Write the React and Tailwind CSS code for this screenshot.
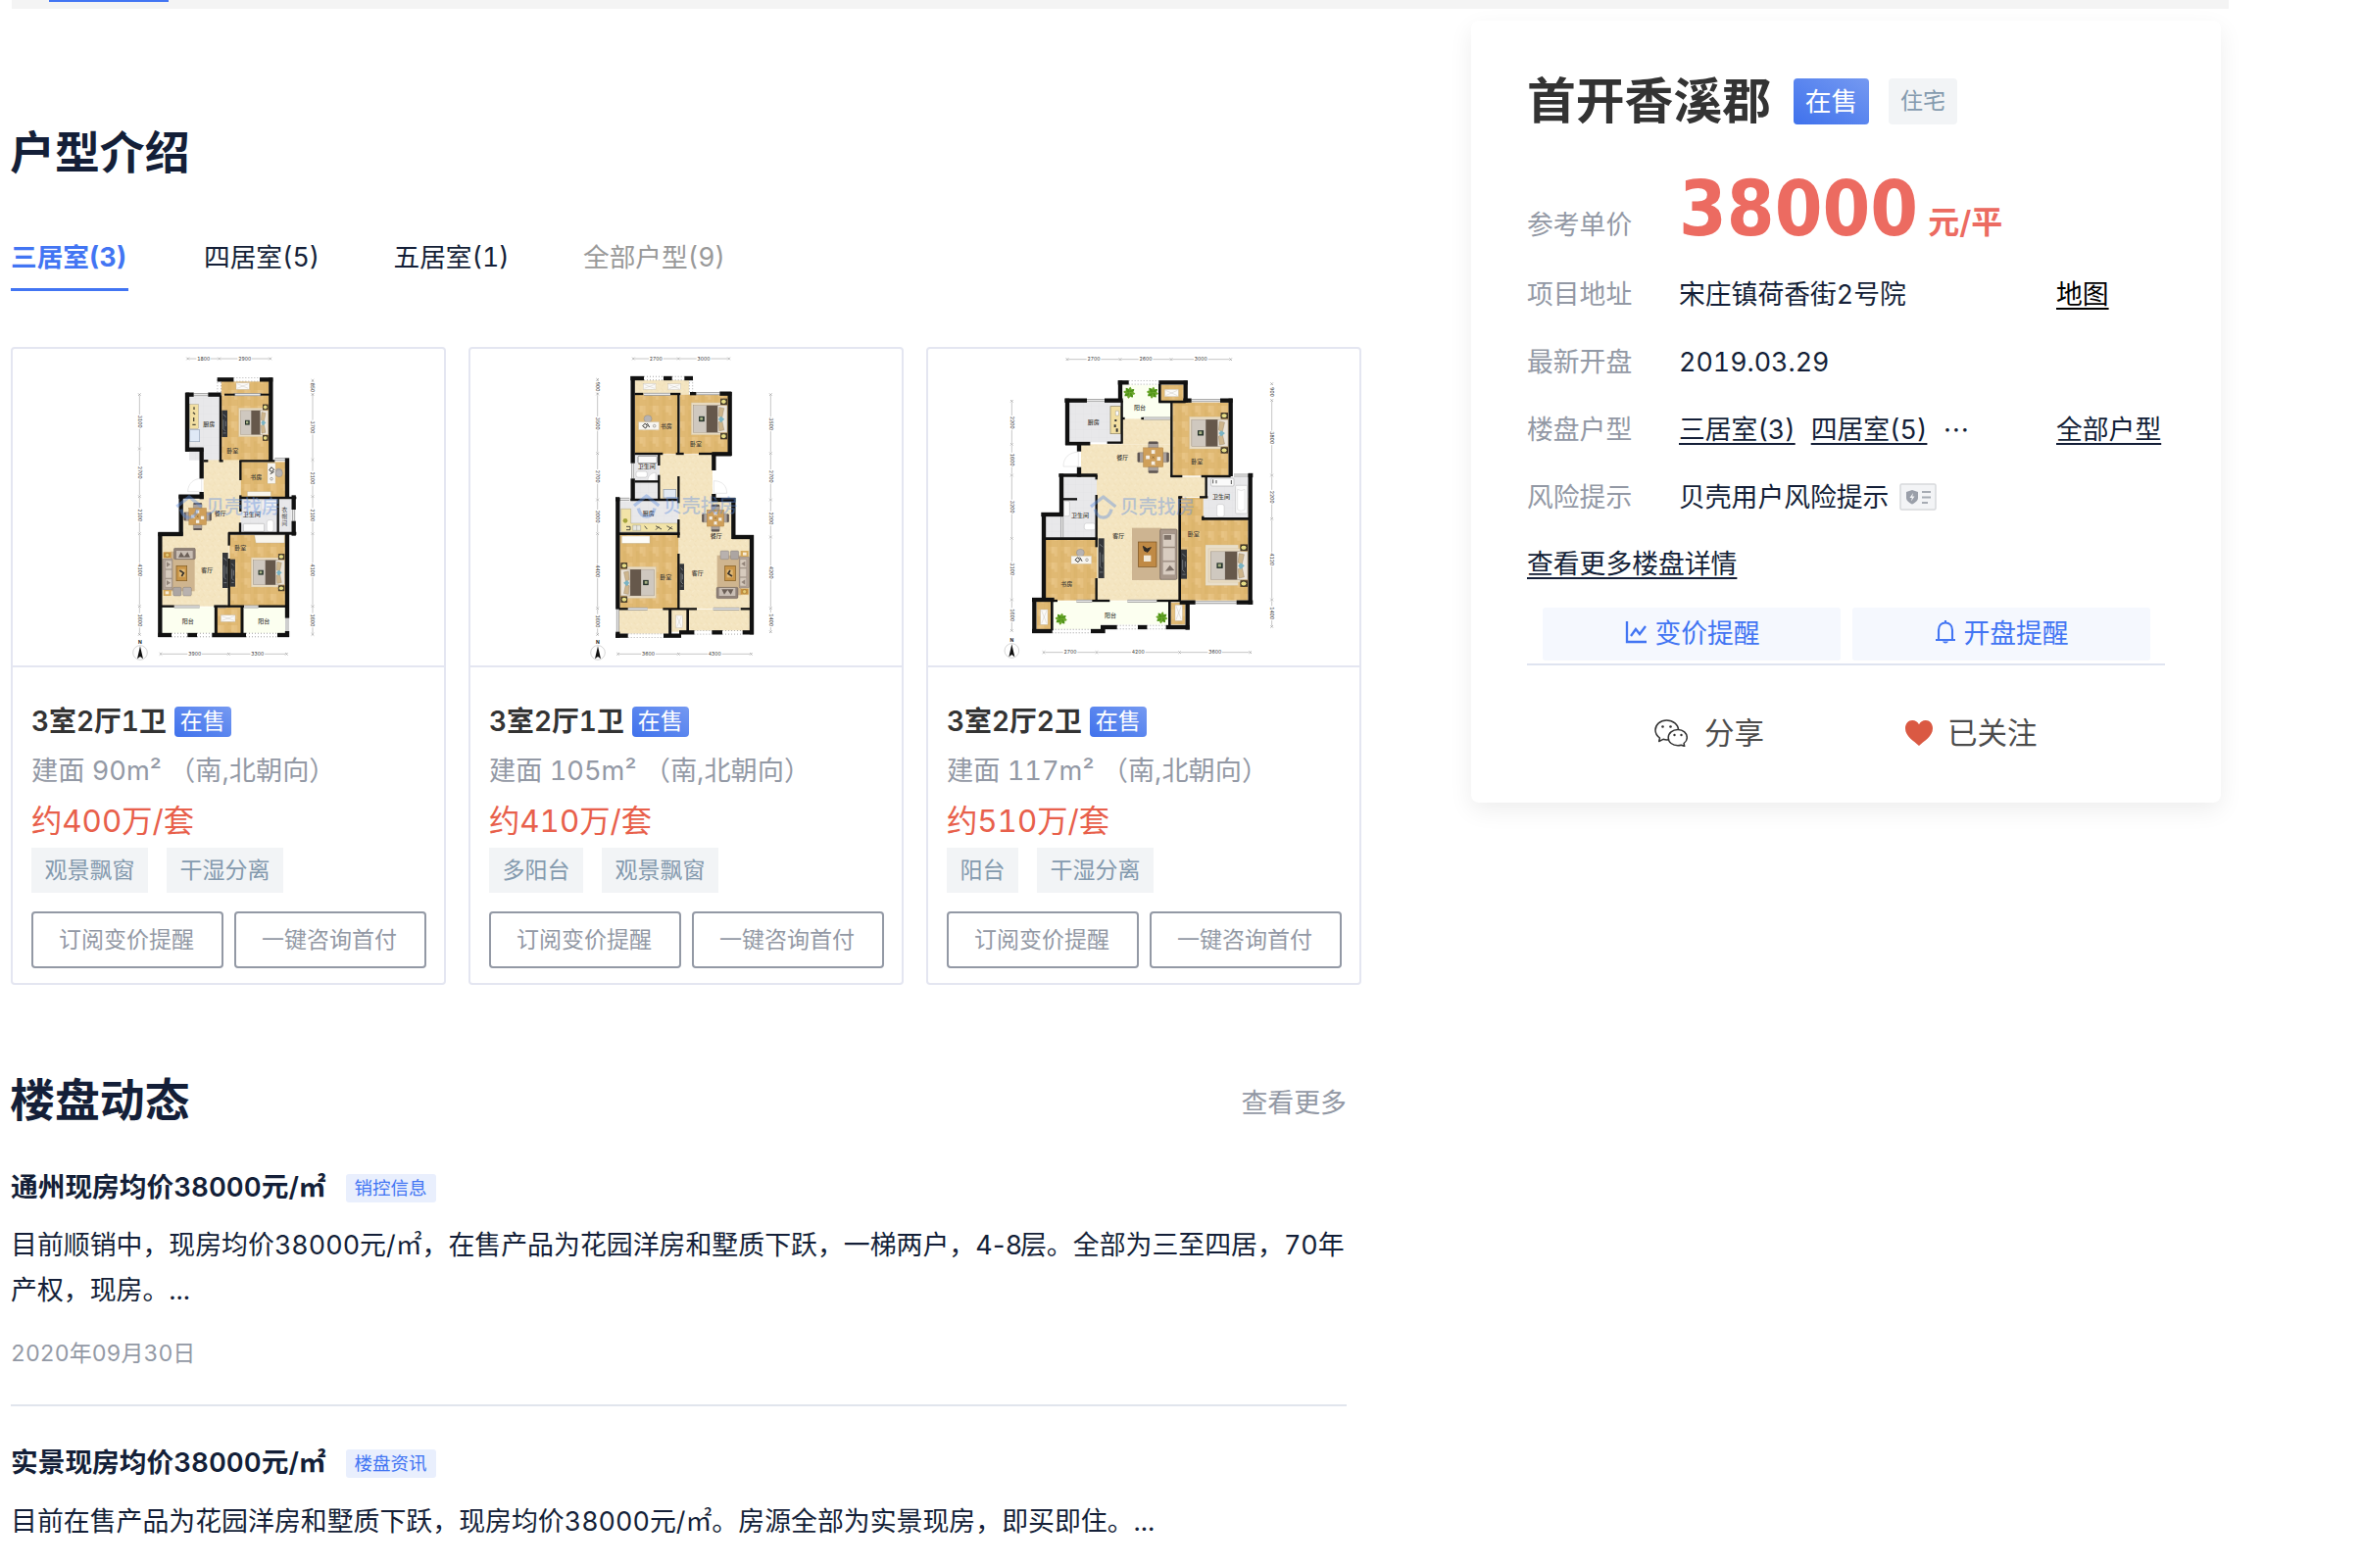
import React from "react";

const FLOOR = {
  wood: "url(#wood)",
  tile: "url(#tile)",
  beige: "url(#marble)",
  balcony: "#fcfff0",
};

function Patterns() {
  return (
    <defs>
      <pattern id="wood" width="40" height="48" patternUnits="userSpaceOnUse">
        <rect width="40" height="48" fill="#e0b973" />
        <rect width="10" height="30" fill="#e6c180" />
        <rect x="20" y="14" width="10" height="34" fill="#dcb56d" />
        <rect x="30" width="10" height="20" fill="#e8c484" />
        <path d="M10 0V48M20 0V48M30 0V48M0 30H10M20 14H30" stroke="#d9b068" strokeWidth="0.7" />
      </pattern>
      <pattern id="tile" width="24" height="24" patternUnits="userSpaceOnUse">
        <rect width="24" height="24" fill="#e8e8ea" />
        <path d="M0 0H24M0 0V24" stroke="#dcdcdf" strokeWidth="1" />
      </pattern>
      <pattern id="marble" width="34" height="34" patternUnits="userSpaceOnUse">
        <rect width="34" height="34" fill="#f4e5c1" />
        <path d="M2 6l8 5M18 3l7 6M8 22l9 4M26 18l5 8M20 30l6-3" stroke="#efdcb0" strokeWidth="2" />
        <path d="M12 14l6-4M28 8l4 5M3 30l6-4" stroke="#f9efd4" strokeWidth="2" />
      </pattern>
    </defs>
  );
}

function Bed({ x, y, w = 90, h = 88, flip }) {
  const t = flip
    ? `translate(${x + w} ${y}) scale(${-w / 90} ${h / 88})`
    : `translate(${x} ${y}) scale(${w / 90} ${h / 88})`;
  return (
    <g transform={t}>
      <rect x="0" y="-3" width="74" height="92" fill="#e9dcc3" stroke="#d3c19c" />
      <rect x="5" y="5" width="66" height="77" fill="#cfc8bf" stroke="#8d8378" />
      <rect x="38" y="5" width="28" height="77" fill="#66584b" />
      <rect x="66" y="5" width="24" height="77" fill="#ece5da" stroke="#9a8d7c" />
      <path d="M70 10l12 3-5 28-9-6zM70 78l12-3-5-28-9 6z" fill="#cdb58c" stroke="#8f7d61" />
      <path d="M74 36l9 8-9 10-6-10z" fill="#79b3c4" />
      <rect x="19" y="36" width="14" height="15" fill="#25332b" />
      <rect x="22" y="39" width="7" height="8" fill="#a7b184" />
      <rect x="73" y="-15" width="17" height="18" fill="#4c3b2a" />
      <circle cx="81" cy="-6" r="7" fill="#e8dd86" stroke="#23201a" strokeWidth="2" />
      <rect x="73" y="84" width="17" height="18" fill="#4c3b2a" />
      <circle cx="81" cy="93" r="7" fill="#e8dd86" stroke="#23201a" strokeWidth="2" />
    </g>
  );
}

function Dining({ x, y, s = 1 }) {
  return (
    <g transform={`translate(${x} ${y}) scale(${s})`}>
      {[0, 90, 180, 270].map((a) => (
        <g key={a} transform={`rotate(${a})`}>
          <rect x="-14" y="-44" width="28" height="20" rx="3" fill="#aaa19b" stroke="#5c5350" />
          <rect x="-14" y="-46" width="28" height="7" rx="3" fill="#5f5653" />
        </g>
      ))}
      <rect x="-29" y="-28" width="58" height="56" fill="#cf9f59" stroke="#9c7137" />
      {[[-16, 0], [16, 4], [0, -16], [0, 17]].map(([a, b]) => (
        <rect key={`${a}${b}`} x={a - 6} y={b - 6} width="12" height="12" fill="#f5efe4" stroke="#b78b4b" />
      ))}
      <path d="M-3-3l6 6M3-3l-6 6" stroke="#7c5a2c" strokeWidth="2" />
    </g>
  );
}

function LivingSet({ x, y, flip }) {
  return (
    <g transform={`translate(${x} ${y})${flip ? " scale(-1 -1)" : ""}`}>
      <rect x="24" y="10" width="74" height="122" fill="#cfb58f" />
      <rect x="34" y="0" width="66" height="34" rx="4" fill="#8f8178" stroke="#5d524b" />
      <rect x="42" y="8" width="50" height="24" fill="#c9beb4" />
      <path d="M48 28l8-16 10 14 10-14 8 16z" fill="#6c6058" />
      <rect x="0" y="32" width="30" height="96" rx="3" fill="#b4a498" stroke="#6a5e55" />
      <path d="M8 38h20v26H8zM8 66h20v26H8zM8 94h20v26H8z" fill="#d6cabd" stroke="#84766b" />
      <path d="M12 42l12 8-12 8zM12 98l12 8-12 8z" fill="#93857a" />
      <rect x="42" y="54" width="32" height="46" fill="#c99548" stroke="#7f5a22" strokeWidth="2" />
      <path d="M50 64h18v24H50z" fill="#e0b976" />
      <path d="M52 68l12 8-6 10" stroke="#34302c" strokeWidth="5" fill="none" />
      <rect x="32" y="120" width="25" height="26" rx="4" fill="#aca5a2" stroke="#6e6765" />
      <rect x="62" y="120" width="26" height="26" rx="4" fill="#b8b1ae" stroke="#6e6765" />
      <rect x="2" y="12" width="24" height="18" fill="#c8923f" />
      <circle cx="14" cy="21" r="6" fill="#e7ca72" stroke="#74501e" />
      <rect x="2" y="128" width="24" height="18" fill="#d6a95b" />
      <rect x="8" y="132" width="11" height="9" fill="#f6ecd8" />
    </g>
  );
}

function Tv({ x, y, w = 17, h = 84 }) {
  return (
    <g>
      <rect x={x} y={y} width={w} height={h} fill="#34363a" />
      <path
        d={`M${x + 4} ${y + h * 0.15}l${w - 8} 8M${x + 5} ${y + h * 0.35}v${h * 0.35}l6 6M${x + w - 5} ${y + h * 0.4}v${h * 0.2}M${x + 4} ${y + h * 0.85}h${w - 8}`}
        stroke="#8f9499"
        strokeWidth="2"
        fill="none"
      />
    </g>
  );
}

function Desk({ x, y, vertical }) {
  return (
    <g transform={`translate(${x} ${y})${vertical ? " rotate(90)" : ""}`}>
      <ellipse cx="28" cy="-10" rx="12" ry="11" fill="#b7b3b2" stroke="#7a7574" />
      <rect x="0" y="0" width="62" height="24" fill="#f7f5f0" stroke="#c6bda9" />
      <path d="M12 12l8-8 6 8-5 7zM26 4l7 12" stroke="#33322f" strokeWidth="3" fill="none" />
      <circle cx="48" cy="12" r="4" fill="none" stroke="#84817a" strokeWidth="2" />
    </g>
  );
}

function Unit({ x, y, w, h }) {
  return (
    <g stroke="#b9b4ab" fill="none">
      <rect x={x} y={y} width={w} height={h} fill="#fbfaf8" />
      <path d={`M${x + 3} ${y + 3}L${x + w - 3} ${y + h - 3}M${x + w - 3} ${y + 3}L${x + 3} ${y + h - 3}`} />
    </g>
  );
}

function Plant({ x, y }) {
  return (
    <g transform={`translate(${x} ${y})`}>
      {[0, 45, 90, 135, 180, 225, 270, 315].map((a) => (
        <path key={a} transform={`rotate(${a})`} d="M0 0C7-5 9-12 3-18C-4-14-5-6 0 0" fill={a % 90 ? "#4f9416" : "#6aa62a"} />
      ))}
    </g>
  );
}

/* Chain of dimension marks along one axis; `v` turns it vertical. */
function Dim({ at, pts, labels, v }) {
  return (
    <g transform={v ? `translate(${at} 0) rotate(90)` : `translate(0 ${at})`}>
      {labels.map((l, i) => {
        const a = pts[i];
        const b = pts[i + 1];
        const m = (a + b) / 2;
        const g = Math.min(22, (b - a) / 2);
        return (
          <g key={i}>
            <path d={`M${a + 4} 0H${m - g}M${m + g} 0H${b - 4}`} stroke="#8c8c8c" strokeWidth="1.5" />
            <text x={m} y="5" fontSize="15" textAnchor="middle" fill="#333">{l}</text>
          </g>
        );
      })}
      {pts.map((p) => (
        <path key={p} d={`M${p - 4}-4l8 8M${p + 4}-4l-8 8`} stroke="#777" strokeWidth="1.5" />
      ))}
    </g>
  );
}

function Compass({ x, y }) {
  return (
    <g transform={`translate(${x} ${y})`}>
      <circle r="22" fill="#fff" stroke="#aaa" strokeWidth="1.5" />
      <path d="M0-20L9 19L0 12L-9 19Z" fill="#111" />
      <text y="-27" fontSize="15" textAnchor="middle" fontWeight="700" fill="#222">N</text>
    </g>
  );
}

function Plan({ vx, floors, walls, windows, dashes, labels, dims, compass, mark, children }) {
  return (
    <svg
      viewBox={`${vx} 18 1320 969`}
      className="block h-[323px] w-[440px] font-['Inter','Noto_Sans_CJK_SC',sans-serif]"
    >
      <Patterns />
      {floors.map(([t, x, y, w, h], i) => (
        <rect key={i} x={x} y={y} width={w} height={h} fill={FLOOR[t]} />
      ))}
      {children}
      {windows.map(([a, b, c, d], i) => (
        <g key={i}>
          <path d={`M${a} ${b}L${c} ${d}`} stroke="#9b9b9b" strokeWidth="9" />
          <path d={`M${a} ${b}L${c} ${d}`} stroke="#e9e9e9" strokeWidth="4" />
        </g>
      ))}
      {dashes.map(([a, b, c, d], i) => (
        <g key={i}>
          <path d={`M${a} ${b}L${c} ${d}`} stroke="#fff" strokeWidth="12" />
          <path d={`M${a} ${b}L${c} ${d}`} stroke="#999" strokeWidth="13" strokeDasharray="3 6" />
          <path d={`M${a} ${b}L${c} ${d}`} stroke="#fff" strokeWidth="8" />
        </g>
      ))}
      {walls.map(([a, b, c, d, w = 13], i) => (
        <path key={i} d={`M${a} ${b}L${c} ${d}`} stroke="#111" strokeWidth={w} />
      ))}
      {labels.map(([s, x, y, v], i) =>
        v ? (
          <text key={i} fontSize="17" fill="#444" textAnchor="middle">
            {s.split("").map((c, k) => (
              <tspan key={k} x={x} y={y + k * 22}>{c}</tspan>
            ))}
          </text>
        ) : (
          <text key={i} x={x} y={y + 6} fontSize="18" fontWeight="500" fill="#3d3a35" textAnchor="middle">{s}</text>
        )
      )}
      <g opacity="0.42" fill="none" stroke="#5f8fe0">
        <path d={`M${mark[0] - 38} ${mark[1] - 2}L${mark[0]} ${mark[1] - 32}L${mark[0] + 38} ${mark[1] - 2}`} strokeWidth="10" strokeLinejoin="round" />
        <path d={`M${mark[0] - 25} ${mark[1] + 6}C${mark[0] - 18} ${mark[1] + 40} ${mark[0] + 18} ${mark[1] + 40} ${mark[0] + 25} ${mark[1] + 6}`} strokeWidth="10" />
        <text x={mark[0] + 51} y={mark[1] + 20} fontSize="57" fontWeight="500" fill="#5f8fe0" stroke="none">贝壳找房</text>
      </g>
      {dims.map((d, i) => (
        <Dim key={i} {...d} />
      ))}
      <Compass x={compass[0]} y={compass[1]} />
    </svg>
  );
}

function PlanA() {
  return (
    <Plan
      vx={-318}
      floors={[
        ["wood", 320, 116, 146, 44], ["tile", 222, 163, 96, 196], ["wood", 320, 160, 148, 200],
        ["tile", 268, 320, 48, 40], ["beige", 266, 358, 114, 124], ["wood", 380, 364, 138, 110],
        ["beige", 203, 478, 177, 116], ["beige", 138, 590, 206, 216], ["tile", 380, 478, 116, 104],
        ["tile", 498, 478, 38, 104], ["wood", 346, 588, 172, 218], ["balcony", 140, 808, 162, 80],
        ["wood", 306, 808, 76, 80], ["balcony", 388, 808, 128, 80], ["beige", 342, 580, 38, 8],
      ]}
      windows={[[236, 158, 280, 158], [484, 356, 516, 356], [542, 510, 542, 545], [522, 842, 522, 882], [358, 158, 444, 158], [176, 807, 254, 807], [300, 807, 335, 807], [390, 807, 434, 807]]}
      dashes={[[358, 112, 438, 112], [314, 112, 314, 158], [168, 894, 217, 894], [246, 894, 292, 894], [396, 894, 492, 894]]}
      walls={[
        [308, 112, 358, 112], [438, 112, 478, 112], [472, 106, 472, 360], [216, 152, 216, 332], [212, 158, 236, 158],
        [280, 158, 320, 158], [210, 326, 266, 326], [260, 322, 260, 415], [318, 160, 318, 362, 7], [330, 158, 362, 158, 6],
        [440, 158, 470, 158, 6], [266, 361, 280, 361, 7], [314, 361, 326, 361, 7], [376, 361, 484, 361, 7], [522, 352, 522, 474],
        [379, 360, 379, 420, 7], [379, 466, 379, 516, 7], [378, 474, 550, 474, 8], [260, 456, 260, 478], [190, 470, 266, 470],
        [197, 466, 197, 590], [127, 585, 203, 585], [133, 580, 133, 900], [494, 476, 494, 582, 7], [542, 466, 542, 510],
        [542, 545, 542, 590], [342, 583, 550, 583, 9], [522, 584, 522, 842], [522, 882, 522, 900], [344, 580, 344, 620, 7],
        [344, 660, 344, 808, 7], [138, 806, 176, 806, 7], [298, 806, 390, 806, 7], [434, 806, 522, 806, 7], [304, 806, 304, 892, 9],
        [384, 806, 384, 892, 9], [127, 894, 168, 894], [217, 894, 246, 894], [292, 894, 396, 894], [492, 894, 528, 894],
        [378, 550, 378, 582, 7],
      ]}
      labels={[["厨房", 283, 250], ["卧室", 355, 331], ["书房", 427, 411], ["餐厅", 317, 521], ["卫生间", 413, 524], ["衣帽间", 514, 515, true], ["卧室", 379, 627], ["客厅", 277, 697], ["阳台", 218, 851], ["阳台", 451, 851]]}
      dims={[
        { at: 48, pts: [218, 314, 470], labels: ["1800", "2900"] },
        { at: 70, pts: [158, 324, 470, 584, 806, 892], labels: ["3100", "2700", "2100", "4100", "1600"], v: true },
        { at: 600, pts: [115, 158, 358, 470, 584, 806, 892], labels: ["850", "3700", "2100", "2100", "4100", "1600"], v: true },
        { at: 952, pts: [135, 343, 520], labels: ["3900", "3300"] },
      ]}
      compass={[72, 948]}
      mark={[222, 503]}
    >
      <Unit x={366} y={122} w={40} h={20} />
      <rect x="224" y="188" width="26" height="74" fill="#f2dfa2" stroke="#8b805d" />
      <path d="M237 196v8M234 212l6 6M236 228v12M232 250h10" stroke="#4c4736" strokeWidth="4" />
      <rect x="224" y="266" width="30" height="36" fill="#dfe9f6" stroke="#97a5b9" strokeWidth="2" />
      <Tv x={322} y={206} w={17} h={82} />
      <Bed x={374} y={202} w={90} h={84} />
      <Desk x={486} y={368} vertical />
      <ellipse cx="497" cy="399" rx="11" ry="11" fill="#b7b3b2" stroke="#7a7574" />
      <rect x="400" y="455" width="72" height="14" fill="#f8f5ed" stroke="#b7ab92" />
      <path d="M260 415C236 415 218 430 218 455H260Z" fill="#fff" stroke="#bbb" />
      <Dining x={248} y={531} s={0.92} />
      <rect x="444" y="480" width="46" height="30" fill="#f3f3f3" stroke="#bbb" />
      <rect x="388" y="553" width="64" height="24" rx="3" fill="#fafafa" stroke="#777" />
      <rect x="460" y="542" width="20" height="36" rx="7" fill="#fff" stroke="#aaa" />
      <LivingSet x={141} y={628} />
      <Tv x={324} y={642} w={17} h={108} />
      <Tv x={348} y={662} w={15} h={84} />
      <path d="M422 588h92v24h-88z" fill="#f8f5ed" stroke="#b7ab92" />
      <Bed x={412} y={660} w={102} h={86} />
      <Unit x={319} y={833} w={44} h={20} />
    </Plan>
  );
}

function PlanB() {
  return (
    <Plan
      vx={-327}
      floors={[
        ["beige", 176, 114, 168, 44], ["wood", 176, 158, 134, 182], ["wood", 314, 158, 150, 182], ["tile", 176, 342, 76, 140],
        ["beige", 252, 342, 162, 140], ["tile", 130, 484, 180, 98], ["beige", 310, 478, 164, 336], ["beige", 470, 598, 60, 216],
        ["wood", 130, 588, 180, 226], ["beige", 126, 816, 156, 74], ["beige", 286, 816, 50, 68], ["beige", 340, 816, 190, 66],
      ]}
      windows={[[364, 155, 436, 155], [170, 368, 170, 415], [130, 478, 160, 478], [124, 815, 124, 884], [204, 157, 285, 157], [155, 814, 215, 814], [416, 814, 496, 814]]}
      dashes={[[204, 108, 264, 108], [290, 108, 328, 108], [348, 112, 348, 158], [155, 896, 264, 896], [358, 886, 412, 886], [444, 886, 506, 886]]}
      walls={[
        [163, 108, 204, 108], [264, 108, 290, 108], [328, 108, 354, 108], [170, 102, 170, 368], [345, 155, 364, 155, 10],
        [436, 155, 472, 155], [467, 150, 467, 345], [412, 340, 472, 340], [418, 336, 418, 390], [418, 462, 418, 484],
        [412, 480, 484, 480], [478, 474, 478, 600], [474, 594, 540, 594], [534, 588, 534, 892], [506, 886, 540, 886],
        [412, 886, 444, 886], [312, 886, 358, 886], [264, 896, 318, 896], [117, 896, 155, 896], [124, 474, 124, 815],
        [124, 884, 124, 902], [117, 478, 130, 478], [170, 415, 170, 482], [310, 156, 310, 342, 7], [310, 408, 310, 490, 7],
        [310, 540, 310, 596, 7], [310, 645, 310, 815, 7], [176, 339, 262, 339, 7], [302, 339, 326, 339, 7], [372, 339, 412, 339, 7],
        [176, 156, 202, 156, 7], [285, 156, 316, 156, 7], [250, 340, 250, 375, 7], [250, 404, 250, 480, 7], [176, 424, 250, 424, 7],
        [163, 480, 310, 480, 8], [128, 584, 314, 584, 8], [128, 814, 155, 814, 7], [262, 814, 366, 814, 7], [500, 814, 534, 814, 7],
        [284, 814, 284, 892, 9], [338, 814, 338, 884, 8],
      ]}
      labels={[["书房", 272, 256], ["卧室", 363, 310], ["卫生间", 212, 378], ["厨房", 218, 521], ["餐厅", 425, 590], ["客厅", 368, 704], ["卧室", 271, 717]]}
      dims={[
        { at: 48, pts: [172, 310, 464], labels: ["2700", "3000"] },
        { at: 62, pts: [112, 156, 338, 480, 584, 812, 892], labels: ["900", "3500", "2700", "2000", "4400", "1600"], v: true },
        { at: 592, pts: [158, 338, 480, 594, 812, 884], labels: ["3500", "2700", "2200", "4200", "1400"], v: true },
        { at: 952, pts: [125, 310, 532], labels: ["3600", "4300"] },
      ]}
      compass={[63, 948]}
      mark={[212, 500]}
    >
      <Unit x={202} y={124} w={38} h={18} />
      <Unit x={278} y={125} w={38} h={18} />
      <Desk x={188} y={242} />
      <Bed x={349} y={186} w={110} h={94} />
      <rect x="186" y="346" width="58" height="22" rx="3" fill="#fafafa" stroke="#666" strokeWidth="2" />
      <rect x="180" y="393" width="34" height="18" rx="6" fill="#fff" stroke="#999" />
      <path d="M216 422C216 405 228 397 240 397V422Z" fill="#fff" stroke="#aaa" />
      <path d="M418 422C444 422 458 438 458 460H418Z" fill="#fff" stroke="#bbb" />
      <rect x="264" y="448" width="38" height="26" fill="#e2e9f2" stroke="#8e98a6" strokeWidth="2" />
      <path d="M134 508H164V552H306V578H134Z" fill="#f2e4a8" stroke="#8e845e" />
      <circle cx="147" cy="544" r="7" fill="#a5a43c" />
      <path d="M170 558h24v16h-24zM182 558v16" fill="#e8e8df" stroke="#777" />
      <path d="M240 560l18 10M240 572l10-10M274 560l18 10M278 574l12-12M150 562h12v10h-12M206 560l8 10" stroke="#333" strokeWidth="2.500" fill="none" />
      <Dining x={423} y={536} s={0.9} />
      <rect x="136" y="591" width="86" height="22" fill="#fdfcf8" stroke="#b7ab92" />
      <Bed x={133} y={688} w={108} h={92} flip />
      <Tv x={313} y={676} w={14} h={80} />
      <LivingSet x={526} y={782} flip />
      <Unit x={302} y={834} w={20} h={38} />
    </Plan>
  );
}

function PlanC() {
  return (
    <Plan
      vx={-186}
      floors={[
        ["tile", 246, 182, 160, 122], ["balcony", 410, 128, 112, 104], ["balcony", 520, 182, 36, 50], ["wood", 526, 128, 70, 50],
        ["wood", 562, 182, 172, 224], ["beige", 282, 310, 276, 100], ["beige", 408, 232, 150, 78], ["beige", 330, 408, 252, 380],
        ["beige", 556, 410, 108, 62], ["wood", 588, 474, 206, 314], ["tile", 668, 410, 126, 128], ["tile", 656, 476, 14, 62],
        ["tile", 228, 412, 102, 186], ["tile", 174, 532, 54, 64], ["wood", 174, 602, 156, 186], ["balcony", 198, 790, 354, 72],
        ["balcony", 198, 860, 144, 16], ["wood", 146, 792, 44, 84], ["wood", 557, 794, 44, 68],
      ]}
      windows={[[300, 176, 354, 176], [620, 176, 708, 176], [750, 405, 794, 405], [632, 794, 758, 794], [472, 231, 556, 231], [268, 790, 316, 790], [424, 790, 514, 790], [224, 532, 224, 596]]}
      dashes={[[428, 121, 520, 121], [194, 882, 312, 882], [392, 870, 456, 870], [484, 870, 542, 870]]}
      walls={[
        [232, 176, 300, 176], [354, 176, 410, 176], [240, 170, 240, 312], [234, 308, 310, 308, 11], [362, 305, 406, 305, 7],
        [276, 308, 276, 332], [276, 380, 276, 410], [214, 405, 332, 405, 11], [222, 400, 222, 530], [160, 525, 228, 525],
        [168, 520, 168, 790], [132, 786, 200, 786], [139, 780, 139, 888], [132, 882, 194, 882], [312, 882, 356, 882],
        [342, 870, 392, 870], [456, 870, 484, 870], [542, 870, 614, 870], [608, 790, 608, 878], [584, 794, 632, 794],
        [758, 794, 808, 794], [800, 400, 800, 800], [794, 405, 808, 405], [740, 170, 740, 408], [595, 176, 620, 176],
        [708, 176, 746, 176], [602, 115, 602, 182], [395, 121, 428, 121], [520, 121, 608, 121], [402, 115, 402, 180],
        [407, 176, 407, 308, 7], [523, 126, 523, 182, 8], [520, 180, 602, 180, 8], [559, 180, 559, 410, 7], [556, 408, 592, 408, 7],
        [650, 408, 740, 408, 7], [665, 408, 665, 474, 7], [580, 472, 592, 472, 7], [645, 472, 670, 472, 7], [584, 470, 584, 790, 8],
        [655, 530, 655, 542, 7], [652, 538, 798, 538, 8], [329, 405, 329, 418, 7], [329, 465, 329, 600, 7], [228, 478, 270, 478, 7],
        [170, 599, 332, 599, 8], [329, 598, 329, 625, 7], [329, 720, 329, 790, 7], [196, 789, 210, 789, 7], [316, 789, 370, 789, 7],
        [514, 789, 588, 789, 7], [193, 786, 193, 880, 8], [553, 790, 553, 868, 8], [408, 231, 416, 231, 7], [466, 231, 474, 231, 7],
      ]}
      labels={[["阳台", 462, 198], ["厨房", 320, 244], ["餐厅", 409, 350], ["卧室", 637, 362], ["卫生间", 711, 472], ["卫生间", 279, 528], ["客厅", 397, 590], ["卧室", 626, 586], ["书房", 238, 737], ["阳台", 372, 834]]}
      dims={[
        { at: 50, pts: [240, 402, 558, 740], labels: ["2700", "2600", "3000"] },
        { at: 70, pts: [178, 310, 405, 598, 786, 880], labels: ["2200", "1600", "3200", "3100", "1600"], v: true },
        { at: 866, pts: [125, 176, 405, 538, 786, 868], labels: ["900", "3800", "2200", "4120", "1400"], v: true },
        { at: 947, pts: [168, 330, 584, 800], labels: ["2700", "4200", "3600"] },
      ]}
      compass={[70, 942]}
      mark={[350, 503]}
    >
      <Plant x={430} y={152} />
      <Plant x={501} y={152} />
      <Unit x={538} y={142} w={42} h={22} />
      <rect x="372" y="194" width="31" height="84" fill="#f2dfa2" stroke="#8b805d" strokeWidth="2" />
      <path d="M388 208h9v14h-9z" fill="#fff" stroke="#777" />
      <path d="M388 234v6M386 250v8M392 262v10" stroke="#333" strokeWidth="6" />
      <Dining x={503} y={350} s={1.05} />
      <Bed x={614} y={229} w={118} h={94} />
      <path d="M274 334C246 334 228 350 228 378H274Z" fill="#fff" stroke="#bbb" />
      <rect x="680" y="414" width="70" height="24" rx="3" fill="#fafafa" stroke="#777" />
      <path d="M686 418v12M696 420v10M742 420v12" stroke="#555" strokeWidth="3" />
      <rect x="755" y="436" width="36" height="86" rx="3" fill="#fafafa" stroke="#999" />
      <path d="M761 448q12 8 22 0v62q-12 8-22 0z" fill="#fff" stroke="#bbb" />
      <rect x="698" y="494" width="22" height="38" rx="6" fill="#fff" stroke="#aaa" />
      <rect x="229" y="484" width="18" height="46" rx="4" fill="#fafafa" stroke="#999" />
      <rect x="292" y="552" width="34" height="20" rx="6" fill="#fff" stroke="#aaa" />
      <rect x="438" y="566" width="90" height="160" fill="#cdb491" />
      <rect x="457" y="609" width="56" height="76" fill="#c08a45" stroke="#76501f" strokeWidth="2" />
      <path d="M472 622l12 8 12-4-10 14-10-4z" fill="#2f2a25" stroke="#2f2a25" strokeWidth="3" />
      <rect x="474" y="650" width="22" height="19" fill="#f1e9d8" />
      <rect x="524" y="570" width="52" height="154" rx="4" fill="#a9988b" stroke="#6d6057" strokeWidth="2" />
      <path d="M532 584h38v40h-38zM532 627h38v40h-38zM532 670h38v40h-38z" fill="#d8ccc0" stroke="#84766b" />
      <path d="M536 588h22v14h-22zM540 698l14-18 14 16z" fill="#7e7168" />
      <Tv x={335} y={598} w={18} h={122} />
      <Tv x={588} y={632} w={18} h={90} />
      <rect x="663" y="618" width="100" height="124" fill="#e9dfca" stroke="#d3c19c" />
      <Bed x={672} y={633} w={120} h={98} />
      <Desk x={252} y={652} />
      <Unit x={158} y={816} w={22} h={46} />
      <Unit x={570} y={802} w={22} h={48} />
      <Plant x={221} y={845} />
      <Plant x={529} y={841} />
    </Plan>
  );
}

const TABS = ["三居室(3)", "四居室(5)", "五居室(1)", "全部户型(9)"];

const UNITS = [
  { Plan: PlanA, title: "3室2厅1卫", area: "90m²", price: "约400万/套", tags: ["观景飘窗", "干湿分离"] },
  { Plan: PlanB, title: "3室2厅1卫", area: "105m²", price: "约410万/套", tags: ["多阳台", "观景飘窗"] },
  { Plan: PlanC, title: "3室2厅2卫", area: "117m²", price: "约510万/套", tags: ["阳台", "干湿分离"] },
];

function UnitCard({ unit }) {
  return (
    <div className="h-[651px] w-[444px] rounded-[4px] border-2 border-[#e4e6f1]">
      <div className="h-[325px] border-b-2 border-[#e4e6f1]">
        <unit.Plan />
      </div>
      <div className="px-[19px] pt-10">
        <div className="flex h-[31px] items-center gap-[8px]">
          <span className="text-[27.900px] leading-[31px] font-semibold text-[#333]">{unit.title}</span>
          <span className="flex h-[31px] w-[58px] items-center justify-center rounded-[4px] bg-linear-to-tr from-[#3f71ec] to-[#7599f1] pb-px text-[23px] leading-[31px] text-white">
            在售
          </span>
        </div>
        <div className="mt-[15px] flex h-10 items-center text-[27.200px] leading-10 text-[#9399a5]">
          <span className="whitespace-pre">建面 {unit.area} </span>
          <span>（南,北朝向）</span>
        </div>
        <div className="mt-[11px] text-[31.300px] leading-10 text-[#e8604b]">{unit.price}</div>
        <div className="mt-[7px] flex gap-[19px]">
          {unit.tags.map((t) => (
            <span key={t} className="h-[46px] bg-[#f2f4f6] px-[13.5px] text-[23px] leading-[47px] text-[#849aae]">
              {t}
            </span>
          ))}
        </div>
        <div className="mt-[19px] flex gap-[11px]">
          {["订阅变价提醒", "一键咨询首付"].map((b) => (
            <button
              key={b}
              className="h-[58px] w-[196px] shrink-0 rounded-[4px] border-2 border-[#9399a5] pr-[2px] text-[23px] leading-[52px] text-[#9399a5]"
            >
              {b}
            </button>
          ))}
        </div>
      </div>
    </div>
  );
}

function NewsTitle({ text, tag }) {
  return (
    <div className="flex h-10 items-center gap-5">
      <span className="text-[27.700px] leading-10 font-semibold">{text}</span>
      <span className="mt-[3px] h-[29px] rounded-[3px] bg-[#e9effd] px-[9px] text-[18.5px] leading-[29px] text-[#4275f3]">
        {tag}
      </span>
    </div>
  );
}

function InfoRow({ label, children, action }) {
  return (
    <div className="flex h-[69px] items-center text-[26.800px] leading-10">
      <span className="w-[155px] text-[#9399a5]">{label}</span>
      <div className="flex w-[385px] items-center">{children}</div>
      {action}
    </div>
  );
}

const LINK = "underline decoration-2 underline-offset-4";

function SidePanel() {
  return (
    <aside className="mt-3 ml-[113px] h-[798px] w-[765px] shrink-0 rounded-[8px] bg-white pr-[57px] pl-[57px] shadow-[0_8px_24px_rgba(0,0,0,0.07)]">
      <div className="flex h-[164px] items-center">
        <h1 className="text-[49.800px] leading-[64px] font-bold text-[#333]">首开香溪郡</h1>
        <span className="ml-[23px] flex h-[47px] w-[77px] items-center justify-center rounded-[4px] bg-linear-to-tr from-[#3f71ec] to-[#7599f1] text-[26.7px] text-white">
          在售
        </span>
        <span className="ml-[20px] flex h-[47px] w-[70px] items-center justify-center rounded-[4px] bg-[#f2f4f6] pt-px text-[23px] text-[#849aae]">
          住宅
        </span>
      </div>
      <div className="flex h-[80px] items-end leading-none">
        <span className="w-[155px] pb-[22px] text-[26.8px] text-[#9399a5]">参考单价</span>
        <span className="pb-[12px] font-['DejaVu_Sans_Condensed','Open_Sans',sans-serif] text-[78px] leading-[80px] font-bold text-[#ec6b61]">
          38000
        </span>
        <span className="ml-[10px] pb-[22px] text-[32px] font-semibold text-[#ec6b61]">元/平</span>
      </div>
      <InfoRow label="项目地址" action={<a className={`${LINK} text-black`}>地图</a>}>
        <span>宋庄镇荷香街2号院</span>
      </InfoRow>
      <InfoRow label="最新开盘">
        <span>2019.03.29</span>
      </InfoRow>
      <InfoRow label="楼盘户型" action={<a className={LINK}>全部户型</a>}>
        <a className={LINK}>三居室(3)</a>
        <a className={`${LINK} ml-[16px]`}>四居室(5)</a>
        <span className="ml-[16px] font-['Noto_Sans_CJK_SC',sans-serif]">⋯</span>
      </InfoRow>
      <InfoRow label="风险提示">
        <span>贝壳用户风险提示</span>
        <svg viewBox="0 0 38 28" className="ml-[11px] h-[28px] w-[38px]">
          <rect x="1" y="1" width="36" height="26" rx="1.5" fill="#f3f4f6" stroke="#d7d9dc" strokeWidth="1.5" />
          <path d="M13 7l6 2v6c0 3-3 5-6 6.500c-3-1.500-6-3.500-6-6.500V9z" fill="#9a9fa9" />
          <path d="M14 10l-3.500 5h2.300l-.8 3.500 3.500-5h-2.300z" fill="#f3f4f6" />
          <path d="M23 9h9M23 14.500h9M23 20h6" stroke="#a6abb3" strokeWidth="1.800" />
        </svg>
      </InfoRow>
      <div className="flex h-[69px] items-center text-[26.8px]">
        <a className={LINK}>查看更多楼盘详情</a>
      </div>
      <div className="flex h-[69px] gap-3 border-b-2 border-[#dfe4f0] pt-[10px] pr-[15px] pl-4 text-[26.8px] text-[#4275f3]">
        <div className="flex h-[54px] flex-1 items-center justify-center gap-[7px] rounded-[3px] bg-[#f5f8fe] pb-[2px] pl-[2px]">
          <svg viewBox="0 0 23 24" className="mb-[2px] h-6 w-[23px]" fill="none" stroke="currentColor" strokeWidth="2.300">
            <path d="M2 1V22H22" />
            <path d="M6 16L11 9L15 14L21 6" />
          </svg>
          变价提醒
        </div>
        <div className="flex h-[54px] flex-1 items-center justify-center gap-[8px] rounded-[3px] bg-[#f5f8fe] pb-[2px] pl-[2px]">
          <svg viewBox="0 0 20 24" className="mb-[2px] h-6 w-5" fill="none" stroke="currentColor" strokeWidth="2.100">
            <path d="M3 20V10C3 5 6 2.500 10 2.500S17 5 17 10V20" />
            <path d="M0 20H20M10 0V3" />
            <path d="M7 21.500C8 24 12 24 13 21.500Z" fill="currentColor" stroke="none" />
          </svg>
          开盘提醒
        </div>
      </div>
      <div className="flex h-[138px] items-center pb-px text-[30.500px] text-[#4c4c4c]">
        <div className="ml-[130px] flex w-[256px] items-center gap-[17px]">
          <svg viewBox="0 0 34 28" className="h-7 w-[34px]" fill="#fff" stroke="#333" strokeWidth="1.500" strokeLinejoin="round">
            <path d="M12.500 1C6 1 1 5.300 1 11c0 3.300 1.700 6 4.500 8l-.8 3.500 4.300-2.200c6 2 15.500-1.300 15.500-9.300C24.500 5.300 19 1 12.500 1Z" />
            <path d="M24 10.500c-5.500 0-9.800 3.500-9.800 8.200s4.300 8 9.800 8c1.200 0 2.300-.2 3.400-.5l3.300 1.300-.6-3c2-1.500 3.200-3.500 3.200-5.800 0-4.700-4-8.200-9.300-8.200Z" />
            <g fill="#333" stroke="none">
              <circle cx="8.500" cy="7.500" r="1.300" />
              <circle cx="16.500" cy="7.500" r="1.300" />
              <circle cx="20.500" cy="16" r="1.200" />
              <circle cx="27.500" cy="16" r="1.200" />
            </g>
          </svg>
          分享
        </div>
        <div className="flex items-center gap-[15px]">
          <svg viewBox="0 0 28 26" className="h-[26px] w-7" fill="#da5943">
            <path d="M14 26C9 21 0 16.500 0 8.200C0 3.500 3.200 0 7.200 0C10.300 0 12.800 1.800 14 4.200C15.200 1.800 17.700 0 20.800 0C24.800 0 28 3.500 28 8.200C28 16.500 19 21 14 26Z" />
          </svg>
          已关注
        </div>
      </div>
    </aside>
  );
}

export default function App() {
  return (
    <div className="h-[1600px] w-[2410px] overflow-hidden bg-white font-['Inter','Noto_Sans_CJK_SC',sans-serif] text-[#141f38] tabular-nums">
      <div className="ml-3 h-[9px] w-[2262px] bg-[#f4f4f4] pl-[38px]">
        <div className="h-[2px] w-[122px] bg-[#4275f3]" />
      </div>
      <div className="ml-[11px] flex">
        <main className="w-[1377px] shrink-0 pt-[115px]">
          <h2 className="-ml-px text-[45.900px] leading-[64px] font-bold">户型介绍</h2>
          <nav className="mt-[54px] flex h-[55px] text-[26.700px] leading-10">
            {TABS.map((t, i) => (
              <a
                key={t}
                className={
                  i === 0
                    ? "mr-[77px] h-[55px] w-[120px] border-b-[3px] border-[#4275f3] font-bold whitespace-nowrap text-[#4275f3]"
                    : i === 3
                      ? "text-[#999]"
                      : "w-[193.500px]"
                }
              >
                {t}
              </a>
            ))}
          </nav>
          <div className="mt-[57px] flex gap-[23px]">
            {UNITS.map((u, i) => (
              <UnitCard key={i} unit={u} />
            ))}
          </div>
          <section className="mt-[84px] w-[1363px]">
            <div className="flex h-[64px] items-center justify-between">
              <h2 className="-ml-px pt-[3px] text-[45.900px] leading-[64px] font-bold">楼盘动态</h2>
              <a className="pt-2 text-[26.900px] text-[#9399a5]">查看更多</a>
            </div>
            <article className="mt-[38px] border-b-2 border-[#e1e5ed] pb-8">
              <NewsTitle text="通州现房均价38000元/㎡" tag="销控信息" />
              <p className="mt-4 text-[26.900px] leading-[46px] whitespace-nowrap">
                目前顺销中，现房均价38000元/㎡，在售产品为花园洋房和墅质下跃，一梯两户，
                <span className="tracking-[-2.200px]">4-8</span>层。全部为三至四居，70年
                <br />
                产权，现房。...
              </p>
              <div className="mt-[22px] text-[23px] leading-10 text-[#9399a5]">2020年09月30日</div>
            </article>
            <article className="pt-[37px]">
              <NewsTitle text="实景现房均价38000元/㎡" tag="楼盘资讯" />
              <p className="mt-[17px] text-[26.900px] leading-[46px] whitespace-nowrap">
                目前在售产品为花园洋房和墅质下跃，现房均价38000元/㎡。房源全部为实景现房，即买即住。...
              </p>
            </article>
          </section>
        </main>
        <SidePanel />
      </div>
    </div>
  );
}
